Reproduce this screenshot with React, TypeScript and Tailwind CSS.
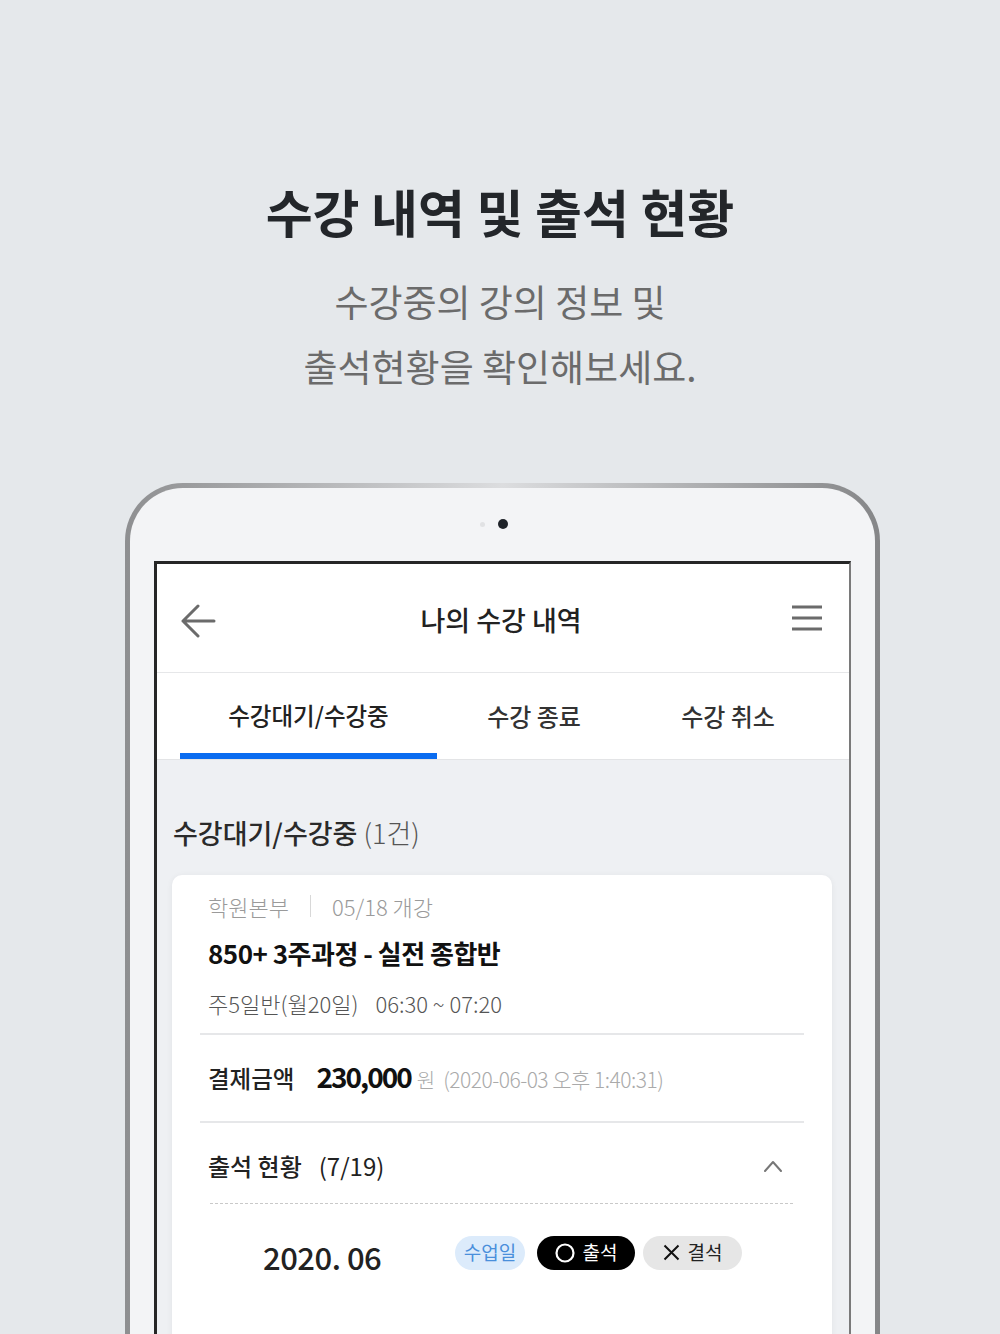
const font = { fontFamily: '"Noto Sans CJK KR", "Noto Sans", sans-serif' };

function BackArrow() {
  return (
    <svg width="36" height="34" viewBox="0 0 36 34" fill="none" stroke="#6b6b6b" strokeWidth="3" strokeLinecap="round" strokeLinejoin="round">
      <path d="M34 17H3M18 2 3 17l15 15" />
    </svg>
  );
}

function Hamburger() {
  return (
    <svg width="30" height="26" viewBox="0 0 30 26" fill="none" stroke="#6b6b6b" strokeWidth="3">
      <path d="M0 2h30M0 13h30M0 24h30" />
    </svg>
  );
}

function ChevronUp() {
  return (
    <svg width="18" height="12" viewBox="0 0 18 12" fill="none" stroke="#777" strokeWidth="2" strokeLinecap="round" strokeLinejoin="round">
      <path d="M1 11 9 2l8 9" />
    </svg>
  );
}

export default function App() {
  const days = ["일", "월", "화", "수", "목", "금", "토"];
  return (
    <div className="w-[1000px] h-[1334px] overflow-hidden bg-[#e5e8eb] flex flex-col items-center" style={font}>
      <h1 className="mt-[181px] text-[51px] leading-[60px] font-bold text-[#23262a]">
        수강 내역 및 출석 현황
      </h1>
      <p className="mt-[28px] text-[37px] leading-[65px] text-[#6b6b6b] text-center">
        수강중의 강의 정보 및
        <br />
        출석현황을 확인해보세요.
      </p>

      {/* tablet */}
      <div className="mt-[84px] ml-[5px] w-[755px] h-[900px] shrink-0 rounded-t-[58px] p-[5px] pb-0 bg-gradient-to-r from-[#8e8f91] via-[#dcdddf] to-[#858688]">
        <div className="h-full rounded-t-[53px] bg-[#f3f4f6] px-[24px] pt-[31px]">
          <div className="flex items-center justify-center h-[10px] mb-[32px]">
            <div className="w-[5px] h-[5px] rounded-full bg-[#e1e2e4]" />
            <div className="w-[10px] h-[10px] rounded-full bg-[#1f2329] ml-[13px]" />
            <div className="w-[5px] h-[5px] ml-[13px]" />
          </div>

          {/* screen */}
          <div className="h-full border-t-[3px] border-l-[3px] border-r-2 border-t-[#262626] border-l-[#262626] border-r-[#7a7a7a] bg-[#eef0f3]">
            <div className="bg-white h-[109px] border-b border-[#e6e7e9] flex items-center pl-[23px] pr-[27px]">
              <div className="w-[60px] flex items-center pt-[6px]">
                <BackArrow />
              </div>
              <div className="flex-1 text-center text-[27px] font-medium text-[#222] pt-[5px]">나의 수강 내역</div>
              <div className="w-[60px] flex justify-end">
                <Hamburger />
              </div>
            </div>

            <div className="bg-white border-b border-[#e3e4e6] grid grid-cols-[257px_194px_194px] px-[23px]">
              <div className="flex flex-col">
                <div className="h-[80px] pt-[6px] flex items-center justify-center text-[23.5px] font-medium text-[#222]">수강대기/수강중</div>
                <div className="h-[6px] bg-[#0a6cf0]" />
              </div>
              <div className="h-[86px] pt-[6px] flex items-center justify-center pb-[6px] text-[24px] font-medium text-[#333]">수강 종료</div>
              <div className="h-[86px] pt-[6px] flex items-center justify-center pb-[6px] text-[24px] font-medium text-[#333]">수강 취소</div>
            </div>

            <div className="pl-[15px] pr-[17px]">
              <div className="pt-[55px] pl-[1px] text-[27px] leading-[36px] font-medium text-[#2a2a2a]">
                수강대기/수강중 <span className="font-light text-[#555]">(1건)</span>
              </div>

              <div className="mt-[24px] bg-white rounded-[10px] shadow-[0_1px_6px_rgba(0,0,0,0.06)] px-[28px] pb-[200px]">
                <div className="pt-[16px] pl-[8px] flex items-center text-[22px] leading-[30px] text-[#9a9a9a] font-light">
                  <span>학원본부</span>
                  <span className="w-px h-[22px] bg-[#d8d8d8] mx-[21px]" />
                  <span>05/18 개강</span>
                </div>
                <div className="mt-[14px] pl-[8px] text-[26px] leading-[36px] font-bold text-[#111] tracking-[-0.5px]">
                  850+ 3주과정 - 실전 종합반
                </div>
                <div className="mt-[17px] pl-[8px] text-[22px] leading-[30px] text-[#555] font-light">
                  주5일반(월20일)<span className="ml-[17px]">06:30 ~ 07:20</span>
                </div>
                <div className="mt-[15px] h-[2px] bg-[#e6e7e9]" />

                <div className="h-[86px] pl-[8px] flex items-baseline pt-[20px]">
                  <span className="text-[23.5px] font-medium text-[#222]">결제금액</span>
                  <span className="ml-[22px] text-[28px] font-bold text-[#111] tracking-[-2px]">230,000</span>
                  <span className="ml-[6px] text-[20px] text-[#aaa] font-light">원</span>
                  <span className="ml-[8px] text-[21px] text-[#aaa] font-light tracking-[-0.5px]">(2020-06-03 오후 1:40:31)</span>
                </div>
                <div className="h-[2px] bg-[#e6e7e9]" />

                <div className="h-[80px] pt-[5px] pl-[8px] pr-[22px] flex items-center justify-between">
                  <div className="text-[24px] font-medium text-[#222]">
                    출석 현황<span className="ml-[17px] font-normal">(7/19)</span>
                  </div>
                  <ChevronUp />
                </div>
                <div className="ml-[10px] mr-[11px] border-t border-dashed border-[#c9c9c9]" />

                <div className="mt-[24px] pl-[63px] flex items-center">
                  <div className="w-[192px] pt-[9px] text-[31px] leading-[40px] font-medium text-[#222] tracking-[-0.5px]">2020. 06</div>
                  <div className="w-[70px] h-[34px] rounded-full bg-[#dcebfb] text-[#4a8fdb] text-[19px] flex items-center justify-center">수업일</div>
                  <div className="ml-[12px] w-[98px] h-[34px] rounded-full bg-black text-white text-[19px] flex items-center justify-center gap-[8px]">
                    <svg width="20" height="20" viewBox="0 0 20 20" fill="none" stroke="white" strokeWidth="2.2">
                      <circle cx="10" cy="10" r="8.5" />
                    </svg>
                    출석
                  </div>
                  <div className="ml-[8px] w-[99px] h-[34px] rounded-full bg-[#e6e6e6] text-[#222] text-[19px] flex items-center justify-center gap-[8px]">
                    <svg width="17" height="17" viewBox="0 0 17 17" fill="none" stroke="#111" strokeWidth="2">
                      <path d="M1.5 1.5l14 14M15.5 1.5l-14 14" />
                    </svg>
                    결석
                  </div>
                </div>

                <div className="mt-[52px] ml-[52px] w-[486px] grid grid-cols-7 text-[20px] leading-[30px] text-center text-[#555]">
                  {days.map((d, i) => (
                    <span key={d} className={i === 0 ? "text-[#e0525a]" : i === 6 ? "text-[#c7d9a0]" : ""}>
                      {d}
                    </span>
                  ))}
                </div>
              </div>
            </div>
          </div>
        </div>
      </div>
    </div>
  );
}
